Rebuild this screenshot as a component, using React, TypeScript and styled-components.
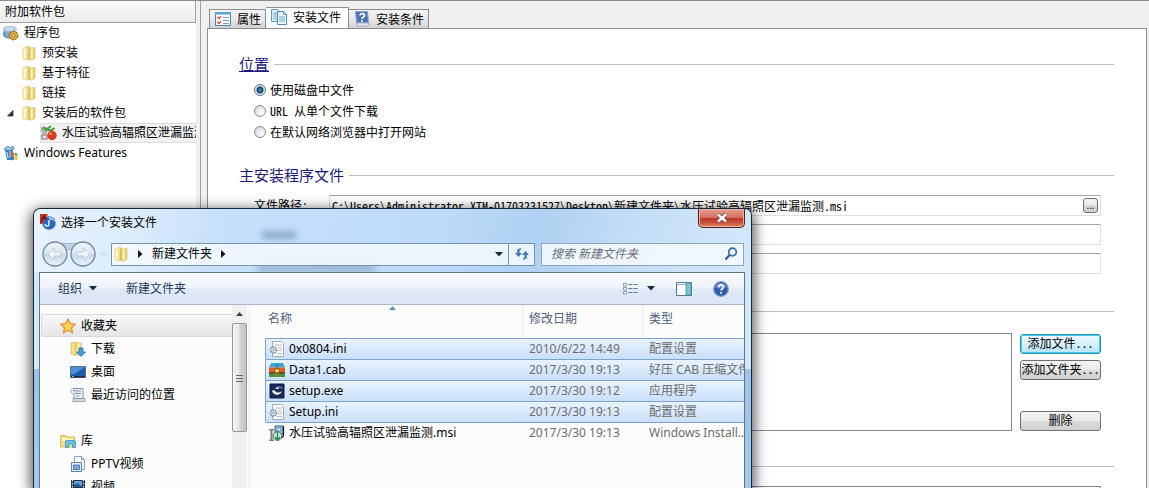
import React from "react";
import styled, { createGlobalStyle, css } from "styled-components";

const uiFont = `"Noto Sans", "Noto Sans CJK SC", sans-serif`;
const formFont = `"Noto Sans Mono CJK SC", "Liberation Mono", "Noto Sans CJK SC", monospace`;

const GlobalStyle = createGlobalStyle`
  * { box-sizing: border-box; }
  body { margin: 0; overflow: hidden; background: #f0f0f0; color: #000; font: 12px/20px ${uiFont}; }
  button, input { font: inherit; color: inherit; margin: 0; padding: 0; }
  ul, h1, h2 { margin: 0; padding: 0; list-style: none; font-weight: normal; }
`;

const Desktop = styled.div`
  position: relative;
  display: flex;
  height: 100vh;
  overflow: hidden;
  border-top: 1px solid #8c8c8c;
`;

/* ---------- package tree ---------- */

const Sidebar = styled.aside`
  flex: 0 0 196px;
  background: #fff;
  overflow: hidden;
`;

const SidebarTitle = styled.h1`
  height: 22px;
  padding-left: 5px;
  font-size: 12px;
  line-height: 21px;
  background: linear-gradient(#fafafa, #ebebeb);
  border-right: 1px solid #a0a0a0;
  border-bottom: 1px solid #a0a0a0;
`;

const TreeRow = styled.li<{ $level: number; $selected?: boolean }>`
  display: flex;
  align-items: center;
  gap: 5px;
  height: 20px;
  margin-left: ${(p) => [3, 7, 40][p.$level]}px;
  white-space: nowrap;
  ${(p) => p.$selected && css`
    background: #f1f1f1;
    border: 1px solid #dedede;
    border-right: 0;
    border-radius: 2px 0 0 2px;
  `}
  svg { flex: none; }
`;

const Expander = styled.span`
  display: flex;
  width: 9px;
  flex: none;
`;

/* ---------- work area ---------- */

const Main = styled.main`
  flex: 1;
  display: flex;
  flex-direction: column;
  min-width: 0;
  margin-left: 4px;
  padding: 6px 2px 0 6px;
  border-left: 1px solid #a0a0a0;
  font-family: ${formFont};
`;

const TabStrip = styled.div`
  display: flex;
  align-items: flex-end;
  height: 22px;
  margin-bottom: -1px;
  padding-left: 2px;
`;

const Tab = styled.button<{ $active?: boolean }>`
  display: flex;
  align-items: center;
  justify-content: center;
  gap: 6px;
  height: ${(p) => (p.$active ? 22 : 20)}px;
  padding: 0 ${(p) => (p.$active ? 7 : 4)}px ${(p) => (p.$active ? 2 : 0)}px 5px;
  border: 1px solid #8c8e94;
  border-bottom-color: ${(p) => (p.$active ? "#fff" : "#8c8e94")};
  background: ${(p) => (p.$active ? "#fff" : "linear-gradient(#f3f3f3, #e9e9e9 50%, #d2d2d2)")};
  & + & { border-left-width: 0; }
`;

const Panel = styled.div`
  flex: 1;
  padding: 25px 32px 0 31px;
  background: #fff;
  border: 1px solid #8c8e94;
  border-bottom: 0;
`;

const Section = styled.section`
  display: flex;
  flex-direction: column;
  gap: 12px;
  margin-bottom: 25px;
`;

const ChoiceSection = styled(Section)`
  gap: 5px;
  margin-bottom: 23px;
`;

const FieldSection = styled(Section)`
  gap: 10px;
  margin-bottom: 27px;
`;

const SectionTitle = styled.h2`
  display: flex;
  align-items: center;
  gap: 5px;
  height: 20px;
  font-size: 15px;
  color: #1a1a7c;
  &::after { content: ""; flex: 1; border-top: 1px solid #bdbdbd; }
`;

const TitleText = styled.span<{ $underlined?: boolean }>`
  text-decoration: ${(p) => (p.$underlined ? "underline" : "none")};
`;

const SectionBody = styled.div<{ $gap?: number }>`
  display: flex;
  flex-direction: column;
  gap: ${(p) => p.$gap ?? 0}px;
  padding: 0 13px 0 15px;
`;

const Choice = styled.label`
  display: flex;
  align-items: center;
  gap: 4px;
  height: 21px;
`;

const Radio = styled.input`
  appearance: none;
  width: 12px;
  height: 12px;
  border: 1px solid #8e8f8f;
  border-radius: 50%;
  background: radial-gradient(circle at 70% 70%, #fff, #cfcfcf);
  &:checked {
    border-color: #5b7082;
    background: radial-gradient(circle, #5fb4d8 0, #14517f 2px, #123f63 3px, #e4eaee 4px);
  }
`;

const FieldRow = styled.div`
  display: flex;
  height: 21px;
`;

const FieldLabel = styled.label`
  flex: 0 0 75px;
`;

const Field = styled.div`
  flex: 1;
  display: flex;
  align-items: center;
  min-width: 0;
  padding: 0 2px;
  background: #fff;
  border: 1px solid #dcdfe3;
  border-top-color: #a4a6aa;
`;

const TextInput = styled.input`
  flex: 1;
  min-width: 0;
  height: 18px;
  border: 0;
  outline: 0;
  background: none;
`;

const PushButton = styled.button<{ $hot?: boolean }>`
  height: 20px;
  line-height: 14px;
  padding-bottom: 3px;
  white-space: nowrap;
  border: 1px solid #707070;
  border-radius: 3px;
  background: linear-gradient(#f3f3f3, #ebebeb 49%, #dcdcdc 50%, #cfcfcf);
  ${(p) => p.$hot && css`
    border-color: #2c91b0;
    box-shadow: inset 0 0 0 1px #40cdf0;
    background: linear-gradient(#eef8fd, #d8f0fb 50%, #b6e4f8);
  `}
`;

const BrowseButton = styled(PushButton)`
  width: 15px;
  height: 15px;
  padding-bottom: 0;
  line-height: 11px;
  font-size: 10px;
  font-family: ${uiFont};
`;

const FilesArea = styled.div`
  display: flex;
  gap: 8px;
  height: 98px;
`;

const FilesBox = styled.div`
  flex: 1;
  border: 1px solid #828790;
`;

const ButtonColumn = styled.div`
  display: flex;
  flex-direction: column;
  gap: 6px;
  width: 81px;
  padding-top: 1px;
  & > :last-child { margin-top: auto; }
`;

const NextBox = styled.div`
  height: 60px;
  border: 1px solid #828790;
`;

/* ---------- file dialog ---------- */

const Dialog = styled.div`
  position: absolute;
  top: 207px;
  left: 33px;
  bottom: 0;
  display: flex;
  flex-direction: column;
  width: 719px;
  padding: 0 6px 0 5px;
  overflow: hidden;
  border: 1px solid #16283a;
  border-bottom: 0;
  border-radius: 7px 7px 0 0;
  background:
    linear-gradient(100deg, #e6f2fd 0, #dcecfb 100px, #c6e0fb 190px, #bddbfa 400px, #b0d1f3 500px, #c4def7 600px, #d3e8fa) 0 0 / 100% 64px no-repeat,
    linear-gradient(#d4eafb 0, #d2e9fa 160px, #9cc4e8 160px, #a4c9ea);
`;

const DialogShadow = styled.div`
  position: absolute;
  top: 207px;
  left: 33px;
  bottom: 0;
  width: 719px;
  border-radius: 7px 7px 0 0;
  box-shadow: 0 4px 14px 2px rgba(0, 0, 0, 0.7);
`;

const Smudge = styled.span<{ $x: number; $y: number; $w: number; $h: number }>`
  position: absolute;
  left: ${(p) => p.$x}px;
  top: ${(p) => p.$y}px;
  width: ${(p) => p.$w}px;
  height: ${(p) => p.$h}px;
  background: #3d5f80;
  opacity: 0.4;
  filter: blur(3px);
`;

const TitleBar = styled.div`
  position: relative;
  display: flex;
  height: 31px;
  gap: 5px;
  padding-left: 1px;
  & > svg { margin-top: 5px; }
`;

const DialogTitle = styled.h2`
  flex: 1;
  padding-top: 4px;
  font-size: 12px;
`;

const CloseButton = styled.button`
  display: flex;
  align-items: center;
  justify-content: center;
  width: 47px;
  height: 19px;
  border: 1px solid #5b1c17;
  border-top: 0;
  border-radius: 0 0 5px 5px;
  box-shadow: inset 0 0 0 1px #eeb1a6;
  background: linear-gradient(#e3a093, #d2705f 48%, #b93522 50%, #c8503c 75%, #df8a68);
`;

const NavBar = styled.div`
  position: relative;
  display: flex;
  align-items: center;
  height: 32px;
  padding: 0 1px 4px 2px;
`;

const AddressBar = styled.div`
  flex: 1;
  display: flex;
  height: 23px;
  margin: 0 6px 0 4px;
  border: 1px solid #7a93ad;
  background: rgba(245, 250, 255, 0.85);
`;

const Crumbs = styled.div`
  flex: 1;
  display: flex;
  align-items: center;
  gap: 9px;
  padding: 0 5px 0 1px;
`;

const CrumbButton = styled.button`
  border: 0;
  background: none;
`;

const PlainButton = styled.button`
  display: flex;
  align-items: center;
  gap: 7px;
  border: 0;
  background: none;
`;

const DropButton = styled(PlainButton)`
  padding-right: 5px;
`;

const RefreshButton = styled(PlainButton)`
  justify-content: center;
  width: 26px;
  border-left: 1px solid #7a93ad;
`;

const SearchBox = styled.div`
  display: flex;
  align-items: center;
  width: 203px;
  height: 23px;
  padding: 0 5px 0 9px;
  border: 1px solid #8fa6be;
  background: rgba(245, 250, 255, 0.88);
`;

const SearchInput = styled(TextInput)`
  font-style: italic;
  &::placeholder { color: #6a6f76; opacity: 1; }
`;

const Client = styled.div`
  position: relative;
  flex: 1;
  display: flex;
  flex-direction: column;
  min-height: 0;
  border: 1px solid #5a7591;
  border-bottom: 0;
  background: #fcfcfc;
`;

const CommandBar = styled.div`
  display: flex;
  align-items: center;
  gap: 29px;
  flex: 0 0 32px;
  padding: 0 15px 0 18px;
  color: #1e395b;
  border-bottom: 1px solid #a9b8cc;
  background: linear-gradient(#fafcfe, #edf3fb 48%, #dfe8f5 52%, #dce6f4);
`;

const CommandTools = styled.div`
  display: flex;
  align-items: center;
  gap: 21px;
  margin-left: auto;
`;

const ViewTools = styled.div`
  display: flex;
  align-items: center;
  gap: 9px;
`;

const Columns = styled.div`
  flex: 1;
  display: flex;
  min-height: 0;
`;

const Places = styled.ul`
  flex: 1;
  min-width: 0;
  padding: 9px 0 0 1px;
`;

const Place = styled.li<{ $root?: boolean; $selected?: boolean; $spaced?: boolean }>`
  display: flex;
  align-items: center;
  gap: 5px;
  height: 23px;
  margin-top: ${(p) => (p.$spaced ? 23 : 0)}px;
  padding-left: ${(p) => (p.$root ? 18 : 28)}px;
  border: 1px solid transparent;
  border-right: 0;
  ${(p) => p.$selected && css`
    border-color: #dadada;
    border-radius: 3px 0 0 3px;
    background: linear-gradient(#f8f8f8, #e6e6e6);
  `}
`;

const PlacesPane = styled.nav`
  flex: 0 0 210px;
  display: flex;
  overflow: hidden;
  margin-right: 2px;
  border-right: 1px solid #e6edf5;
`;

const ScrollBar = styled.div`
  display: flex;
  flex-direction: column;
  align-items: center;
  width: 15px;
  margin-right: 2px;
  padding-top: 7px;
  gap: 7px;
  background: #f0f0f0;
`;

const ScrollThumb = styled.div`
  display: flex;
  align-items: center;
  justify-content: center;
  width: 15px;
  height: 109px;
  border: 1px solid #979797;
  border-radius: 2px;
  background: linear-gradient(90deg, #f4f4f4, #e6e6e6 48%, #d3d3d3 52%, #c5c5c5);
`;

const FilesPane = styled.div`
  position: relative;
  flex: 1;
  min-width: 0;
  overflow: hidden;
  padding-left: 13px;
`;

const SortMark = styled.svg`
  position: absolute;
  left: 137px;
  top: 1px;
`;

const FileTable = styled.table`
  width: 500px;
  table-layout: fixed;
  border-collapse: separate;
  border-spacing: 0;
  white-space: nowrap;
`;

const HeadCell = styled.th<{ $w?: number }>`
  width: ${(p) => (p.$w ? `${p.$w}px` : "auto")};
  height: 33px;
  padding: 0 0 6px 6px;
  color: #4c607a;
  font-weight: normal;
  text-align: left;
  border-right: 1px solid #e8edf3;
  &:first-child { padding-left: 3px; }
`;

const FileRow = styled.tr<{ $selected?: boolean }>`
  height: 21px;
  td {
    height: 21px;
    padding: 0 0 0 6px;
    line-height: 20px;
    color: #6d6d6d;
    border-top: 1px solid ${(p) => (p.$selected ? "#7da2ce" : "transparent")};
    overflow: hidden;
    ${(p) => p.$selected && css`
      background: linear-gradient(#e9f3fe, #c9dffa);
      box-shadow: 0 1px 0 #7da2ce;
    `}
  }
  td:first-child {
    padding-left: 3px;
    color: #000;
    border-left: 1px solid ${(p) => (p.$selected ? "#7da2ce" : "transparent")};
    border-radius: 2px 0 0 2px;
  }
`;

const FileName = styled.span`
  display: flex;
  align-items: center;
  gap: 4px;
`;

/* ---------- drawings ---------- */

const Svg = ({ w = 16, h = 16, children }: { w?: number; h?: number; children: React.ReactNode }) => (
  <svg width={w} height={h} viewBox={`0 0 ${w} ${h}`} aria-hidden="true">{children}</svg>
);

const FolderIcon = () => (
  <Svg>
    <path d="M2 3l5-2v14l-5-1.500z" fill="#f6e69c" stroke="#e3cb74" strokeWidth=".7" />
    <path d="M7 1.500h2v13.300H7z" fill="#dcc164" />
    <path d="M9 3.200l5-.7v11l-5 1.800z" fill="#f3df8c" stroke="#dcc063" strokeWidth=".7" />
    <path d="M3.700 3.500v9.500" stroke="#fffbe2" strokeWidth="1.800" />
    <path d="M10.500 4v9.500" stroke="#fff6c8" strokeWidth="1.500" />
    <path d="M13 3v10.500" stroke="#dfc25c" />
  </Svg>
);

const PackageIcon = () => (
  <Svg>
    <path d="M.5 4v7c1 2 9 2 12 0V4z" fill="#7ea9d4" />
    <ellipse cx="7" cy="4" rx="6.500" ry="2.800" fill="#c3daee" stroke="#86a8c8" strokeWidth=".7" />
    <path d="M1 7v4c2 2 4 2 5 2" fill="none" stroke="#3f6d9f" />
    <circle cx="10.500" cy="10.500" r="4.200" fill="#f3b63c" stroke="#9a6414" strokeWidth="1.400" strokeDasharray="2.200 .9" />
    <circle cx="10.500" cy="10.500" r="1.600" fill="#fff" stroke="#8a5a10" />
  </Svg>
);

const FeaturesIcon = () => (
  <Svg>
    <path d="M2 5l8-1-1 11H4z" fill="#3f7fb4" />
    <path d="M1 4l4-3 2 2 3-2 1 3-5 2z" fill="#9cc6e4" stroke="#3c6e9b" strokeWidth=".7" />
    <path d="M4 7l1 6M7 6v7" stroke="#c7e1f3" />
    <path d="M8 8.500l3-1v3l-3 1z" fill="#e0542f" />
    <path d="M11.500 7.500l3 1v3l-3-1z" fill="#6fb53c" />
    <path d="M8 12l3-1v3.500l-3 1z" fill="#2f77c9" />
    <path d="M11.500 11l3.500 1-1 3h-2.500z" fill="#f3c52f" />
  </Svg>
);

const ProductIcon = () => (
  <Svg>
    <path d="M1 3h5v3H1zM1 8h5M1 10h5v4H1z" fill="#f4e4cf" stroke="#777" strokeWidth="1.100" />
    <path d="M2 2l3 3 5-4" fill="none" stroke="#3aa536" strokeWidth="2" />
    <path d="M7 5l3 .5L13.500 3" fill="none" stroke="#3b8d2c" strokeWidth="1.800" />
    <circle cx="11" cy="10.500" r="4.700" fill="#dc3a1a" />
    <circle cx="9.500" cy="8.800" r="1.300" fill="#f6a084" />
  </Svg>
);

const CollapseIcon = () => (
  <Svg w={7} h={7}><path d="M6 .5V6H.5z" fill="#333" stroke="#222" strokeWidth=".7" /></Svg>
);

const ChecklistIcon = () => (
  <Svg>
    <path d="M.5 1.500h15v13H.5z" fill="#f7fbfd" stroke="#4b86ad" />
    <path d="M0 1h16v2.500H0z" fill="#55a5cf" />
    <path d="M2.500 6l1.500 1.500L6 5M2.500 11l1.500 1.500L6 10" fill="none" stroke="#d23b2c" strokeWidth="1.200" />
    <path d="M8 6.500h6M8 9.500h6M8 12.500h6" stroke="#7ba3a8" />
  </Svg>
);

const PagesIcon = () => (
  <Svg>
    <path d="M.5.5h6l2 2v10h-8z" fill="#e2f0fa" stroke="#5c9ac6" />
    <path d="M2 4h4M2 6h4M2 8h4M2 10h4" stroke="#7db1d6" />
    <path d="M6.500 2.500h6l3 3v10h-9z" fill="#eef7fd" stroke="#4a8cbd" />
    <path d="M12.500 2.500v3h3M8 8h6M8 10h6M8 12h6" fill="none" stroke="#6aa5d0" />
  </Svg>
);

const ConditionIcon = () => (
  <Svg>
    <path d="M1.500.5h12l1 11h-12z" fill="#4a74b8" stroke="#8ca6cf" />
    <path d="M2.500 12h12.500l-1 3H3z" fill="#dfe6f1" stroke="#8798b5" strokeWidth=".7" />
    <path d="M6 4.500c0-2.500 4.500-2.500 4.500 0C10.500 6 8 6 8 8M8 9v1.800" fill="none" stroke="#fff" strokeWidth="1.700" />
  </Svg>
);

const InstallerIcon = () => (
  <Svg>
    <circle cx="9" cy="9" r="6.700" fill="#2c67b8" />
    <path d="M8 3c4-1 7 2 7 5-2-2-4-2-5-2z" fill="#8cc0ec" />
    <path d="M9 6v4a2 2 0 0 1-4 0" fill="none" stroke="#dbeeff" strokeWidth="1.500" />
    <path d="M0 0h8L6 4l-4 6H0z" fill="#c9301d" />
    <path d="M1 8l3-6 2 4" fill="none" stroke="#5c120b" strokeWidth="1.200" />
  </Svg>
);

const CloseGlyph = () => (
  <Svg w={12} h={10}>
    <path d="M2 1.500l8 7M10 1.500l-8 7" stroke="#6b3a35" strokeWidth="4" />
    <path d="M2 1.500l8 7M10 1.500l-8 7" stroke="#fff" strokeWidth="2.400" />
  </Svg>
);

const HistoryButtons = () => (
  <Svg w={66} h={26}>
    <defs>
      <linearGradient id="orb" x1="0" x2="0" y1="0" y2="1">
        <stop offset="0" stopColor="#eef4fa" /><stop offset=".48" stopColor="#dbe6f1" />
        <stop offset=".52" stopColor="#c9d8e6" /><stop offset="1" stopColor="#ebf4fb" />
      </linearGradient>
    </defs>
    <path d="M20 2.500h16v6H20z" fill="#c3d4e5" stroke="#8aa3bc" strokeWidth=".7" />
    <circle cx="14" cy="13" r="12" fill="url(#orb)" stroke="#7288a0" strokeWidth="1.300" />
    <circle cx="42" cy="13" r="12" fill="url(#orb)" stroke="#7288a0" strokeWidth="1.300" />
    <path d="M7 13l6-6v4h7v4h-7v4z" fill="#edf4fa" stroke="#b4c5d6" strokeWidth=".8" />
    <path d="M49 13l-6-6v4h-7v4h7v4z" fill="#edf4fa" stroke="#b4c5d6" strokeWidth=".8" />
    <path d="M59 12h6l-3 3.500z" fill="#e9f3fb" stroke="#b0c3d6" strokeWidth=".6" />
  </Svg>
);

const RightMark = () => <Svg w={5} h={8}><path d="M0 0l4.500 4L0 8z" fill="#111" /></Svg>;
const DownMark = () => <Svg w={8} h={5}><path d="M0 0h8L4 4.500z" fill="#12274a" /></Svg>;

const RefreshIcon = () => (
  <Svg>
    <path d="M1 7h2.200V3.500L7 2v1.500l-1.500 1V7H8l-3.500 4z" fill="#3c79b5" />
    <path d="M15 9h-2.200v3.500L9 14v-1.500l1.500-1V9H8l3.500-4z" fill="#3c79b5" />
  </Svg>
);

const SearchIcon = () => (
  <Svg w={14} h={14}>
    <circle cx="8.500" cy="5" r="3.800" fill="#e6f3fd" stroke="#3a6da3" strokeWidth="1.700" />
    <path d="M5.500 8L1.500 12.500" stroke="#2c5a90" strokeWidth="2.200" />
  </Svg>
);

const ViewIcon = () => (
  <Svg>
    <path d="M1.500 2.500h3v2.500h-3zM1.500 6.500h3v2.500h-3zM1.500 10.500h3v2.500h-3z" fill="#fff" stroke="#7189a5" strokeWidth=".8" />
    <path d="M6.500 3.500h4M11.500 3.500h4M6.500 7.500h4M11.500 7.500h4M6.500 11.500h4M11.500 11.500h4" stroke="#61788f" />
  </Svg>
);

const PreviewIcon = () => (
  <Svg>
    <path d="M.5 1.500h15v13H.5z" fill="#fff" stroke="#5b7591" />
    <path d="M1 3.500h10" stroke="#9fb1c5" />
    <path d="M10 2h5v12h-5z" fill="#7cc3d8" stroke="#4f8ea8" strokeWidth=".8" />
  </Svg>
);

const HelpIcon = () => (
  <Svg>
    <circle cx="8" cy="8" r="7.300" fill="#3159b0" stroke="#7f97c4" strokeWidth="1.200" />
    <path d="M2 6c2-5 10-5 12 0-4 2-8 2-12 0z" fill="#6a8bd0" />
    <path d="M5.700 6.200c0-3 4.600-3 4.600 0C10.300 8 8 8 8 9.600M8 11v1.800" fill="none" stroke="#fff" strokeWidth="1.700" />
  </Svg>
);

const StarIcon = () => (
  <Svg><path d="M8 1l2.200 4.600 5 .7-3.700 3.500 1 5L8 12.300 3.500 14.800l1-5L.8 6.300l5-.7z" fill="#ffd257" stroke="#e0862a" strokeWidth="1.100" /></Svg>
);

const DownloadIcon = () => (
  <Svg>
    <path d="M1 2l5-1v13l-5-1z" fill="#f3df8a" stroke="#d2b14a" strokeWidth=".7" />
    <path d="M6 2h5v12H6z" fill="#f8e8a2" stroke="#d2b14a" strokeWidth=".7" />
    <path d="M9 7h4v4h2.500L11 15.500 6.500 11H9z" fill="#3f9fe0" stroke="#1f68aa" strokeWidth=".7" />
  </Svg>
);

const MonitorIcon = () => (
  <Svg>
    <path d="M.5 2.500h15v11H.5z" fill="#1f5db0" stroke="#5f6c7c" />
    <path d="M1 3h14L4 10H1z" fill="#4e90da" />
    <path d="M1 12h14v1.500H1z" fill="#163055" />
    <path d="M2 12h2v1H2z" fill="#7ed06a" />
  </Svg>
);

const RecentIcon = () => (
  <Svg>
    <path d="M4 1.500h9v10H4z" fill="#eef4f9" stroke="#8396aa" />
    <path d="M3 11.500h12v3H3z" fill="#cfdae5" stroke="#8396aa" strokeWidth=".8" />
    <path d="M6 4h5M6 6.500h5M6 9h3" stroke="#6f8fb0" />
    <circle cx="3.500" cy="4" r="2.700" fill="#fff" stroke="#9aa9b8" />
    <path d="M3.500 2.500V4H5" fill="none" stroke="#557" strokeWidth=".8" />
  </Svg>
);

const LibraryIcon = () => (
  <Svg>
    <path d="M.5 2.500h5l1 1.500h8v10H.5z" fill="#f5dd83" stroke="#cfac45" strokeWidth=".8" />
    <path d="M2 5h11v3H2z" fill="#fdf3c0" />
    <path d="M5.500 14.500V9a1.500 1.500 0 0 1 1.500-1.500h7A1.500 1.500 0 0 1 15.500 9v5.500h-3V11h-4v3.500z" fill="#6bc1e8" stroke="#3b8fc0" strokeWidth=".8" />
  </Svg>
);

const PptvIcon = () => (
  <Svg>
    <path d="M4.500.5h7l3 3v10h-10z" fill="#f4f8fc" stroke="#8da3ba" />
    <path d="M11.500.5v3h3" fill="none" stroke="#8da3ba" />
    <path d="M1.500 6.500h10v9h-10z" fill="#e3eefa" stroke="#5c83b3" />
    <path d="M3.500 9h6v4.500h-6z" fill="#77a9de" stroke="#3a6fb0" strokeWidth=".8" />
  </Svg>
);

const FilmIcon = () => (
  <Svg>
    <path d="M1 1h14v14H1z" fill="#27313c" />
    <path d="M4 2h8v6H4zM4 9h8v5H4z" fill="#5ba7dd" />
    <path d="M4 6l3-2 5 3v1H4z" fill="#2c5d90" />
    <path d="M2.500 1v14M13.500 1v14" stroke="#e3e8ec" strokeWidth="1.200" strokeDasharray="1.500 1.500" />
  </Svg>
);

const IniIcon = () => (
  <Svg>
    <path d="M3.500.5h9l2 2v13h-11z" fill="#fbfbfb" stroke="#9aa3ac" strokeWidth=".9" />
    <path d="M6 4h7M9 7h4M9 9.500h4M8 12.500h5" stroke="#b4bcc4" />
    <circle cx="4.500" cy="9" r="3" fill="#e3ebf2" stroke="#71879c" strokeWidth="1.500" strokeDasharray="1.500 .7" />
    <circle cx="4.500" cy="9" r="1" fill="#fff" stroke="#71879c" strokeWidth=".6" />
  </Svg>
);

const CabIcon = () => (
  <Svg>
    <path d="M2 1h12l2 4.500H0z" fill="#3fa9d6" />
    <path d="M0 5.500h16v4.500H0z" fill="#d9622c" />
    <path d="M0 10h16v2H0z" fill="#7b3a1c" />
    <path d="M0 11.500h16v3.500H0z" fill="#3f9447" />
    <path d="M6.500 5.500h3V15h-3z" fill="#a8702c" />
    <path d="M5.500 7h5v3.500h-5z" fill="#f2cf5b" stroke="#7a4d14" strokeWidth=".7" />
    <path d="M6 2l2 2 2-2" fill="none" stroke="#2a7fae" strokeWidth="1.200" />
  </Svg>
);

const SetupIcon = () => (
  <Svg>
    <path d="M1 1h14v14H1z" fill="#182c5a" stroke="#0c1a3a" />
    <path d="M3 8c2 5 8 5 10 0-3 2.500-6 2-8-1z" fill="#fff" />
    <path d="M6 6l3-3 1 3z" fill="#cfe0f5" />
    <path d="M10 4c2 0 3 1 3 2" fill="none" stroke="#8fb1e0" />
  </Svg>
);

const MsiIcon = () => (
  <Svg>
    <path d="M0 4h5v1.500H3.500v9H5V16H0v-1.500h1.500v-9H0z" fill="#777d80" />
    <path d="M6 1h8v8H6z" fill="#a9d3ee" stroke="#265b8c" />
    <path d="M8 3h4v3H8z" fill="#fff" stroke="#265b8c" strokeWidth=".7" />
    <path d="M14.500 1v10l-2 2" fill="none" stroke="#222" strokeWidth="1.300" />
    <circle cx="8.500" cy="11" r="4.300" fill="#d4e6dc" stroke="#33735a" />
    <path d="M8.500 7v8M6 12l2.500 3 2.500-3" fill="none" stroke="#1f8a4c" strokeWidth="1.300" />
  </Svg>
);

/* ---------- data ---------- */

const files = [
  { name: "0x0804.ini", date: "2010/6/22 14:49", kind: "配置设置", Icon: IniIcon, selected: true },
  { name: "Data1.cab", date: "2017/3/30 19:13", kind: "好压 CAB 压缩文件", Icon: CabIcon, selected: true },
  { name: "setup.exe", date: "2017/3/30 19:12", kind: "应用程序", Icon: SetupIcon, selected: true },
  { name: "Setup.ini", date: "2017/3/30 19:13", kind: "配置设置", Icon: IniIcon, selected: true },
  { name: "水压试验高辐照区泄漏监测.msi", date: "2017/3/30 19:13", kind: "Windows Install...", Icon: MsiIcon, selected: false },
];

const places = [
  { name: "收藏夹", Icon: StarIcon, root: true, selected: true },
  { name: "下载", Icon: DownloadIcon },
  { name: "桌面", Icon: MonitorIcon },
  { name: "最近访问的位置", Icon: RecentIcon },
  { name: "库", Icon: LibraryIcon, root: true, spaced: true },
  { name: "PPTV视频", Icon: PptvIcon },
  { name: "视频", Icon: FilmIcon },
];

const choices = ["使用磁盘中文件", "URL 从单个文件下载", "在默认网络浏览器中打开网站"];

const PackageTree = () => (
  <Sidebar>
    <SidebarTitle>附加软件包</SidebarTitle>
    <ul>
      <TreeRow $level={0}><PackageIcon />程序包</TreeRow>
      {["预安装", "基于特征", "链接"].map((name) => (
        <TreeRow key={name} $level={1}><Expander /><FolderIcon />{name}</TreeRow>
      ))}
      <TreeRow $level={1}><Expander><CollapseIcon /></Expander><FolderIcon />安装后的软件包</TreeRow>
      <TreeRow $level={2} $selected><ProductIcon />水压试验高辐照区泄漏监测</TreeRow>
      <TreeRow $level={0}><FeaturesIcon />Windows Features</TreeRow>
    </ul>
  </Sidebar>
);

const InstallForm = () => (
  <Main>
    <TabStrip role="tablist">
      <Tab role="tab"><ChecklistIcon />属性</Tab>
      <Tab role="tab" $active aria-selected="true"><PagesIcon />安装文件</Tab>
      <Tab role="tab"><ConditionIcon />安装条件</Tab>
    </TabStrip>
    <Panel>
      <ChoiceSection>
        <SectionTitle><TitleText $underlined>位置</TitleText></SectionTitle>
        <SectionBody>
          {choices.map((text, i) => (
            <Choice key={text}><Radio type="radio" name="source" defaultChecked={i === 0} />{text}</Choice>
          ))}
        </SectionBody>
      </ChoiceSection>
      <FieldSection>
        <SectionTitle><TitleText>主安装程序文件</TitleText></SectionTitle>
        <SectionBody $gap={8}>
          <FieldRow>
            <FieldLabel htmlFor="path">文件路径:</FieldLabel>
            <Field>
              <TextInput id="path" defaultValue="C:\Users\Administrator.XTM-01703231527\Desktop\新建文件夹\水压试验高辐照区泄漏监测.msi" />
              <BrowseButton>...</BrowseButton>
            </Field>
          </FieldRow>
          <FieldRow><FieldLabel htmlFor="args" /><Field><TextInput id="args" /></Field></FieldRow>
          <FieldRow><FieldLabel htmlFor="quiet" /><Field><TextInput id="quiet" /></Field></FieldRow>
        </SectionBody>
      </FieldSection>
      <Section>
        <SectionTitle />
        <SectionBody>
          <FilesArea>
            <FilesBox />
            <ButtonColumn>
              <PushButton $hot>添加文件...</PushButton>
              <PushButton>添加文件夹...</PushButton>
              <PushButton>删除</PushButton>
            </ButtonColumn>
          </FilesArea>
        </SectionBody>
      </Section>
      <FieldSection>
        <SectionTitle />
        <SectionBody><NextBox /></SectionBody>
      </FieldSection>
    </Panel>
  </Main>
);

const OpenDialog = () => (
  <>
    <DialogShadow />
    <Dialog role="dialog">
      <Smudge $x={228} $y={22} $w={34} $h={8} />
      <Smudge $x={223} $y={56} $w={118} $h={6} />
      <TitleBar>
        <InstallerIcon />
        <DialogTitle>选择一个安装文件</DialogTitle>
        <CloseButton><CloseGlyph /></CloseButton>
      </TitleBar>
      <NavBar>
        <HistoryButtons />
        <AddressBar>
          <Crumbs>
            <FolderIcon />
            <RightMark />
            <CrumbButton>新建文件夹</CrumbButton>
            <RightMark />
          </Crumbs>
          <DropButton><DownMark /></DropButton>
          <RefreshButton><RefreshIcon /></RefreshButton>
        </AddressBar>
        <SearchBox>
          <SearchInput type="text" placeholder="搜索 新建文件夹" />
          <SearchIcon />
        </SearchBox>
      </NavBar>
      <Client>
        <CommandBar>
          <PlainButton>组织<DownMark /></PlainButton>
          <PlainButton>新建文件夹</PlainButton>
          <CommandTools>
            <ViewTools>
              <PlainButton><ViewIcon /></PlainButton>
              <PlainButton><DownMark /></PlainButton>
            </ViewTools>
            <PlainButton><PreviewIcon /></PlainButton>
            <PlainButton><HelpIcon /></PlainButton>
          </CommandTools>
        </CommandBar>
        <Columns>
          <PlacesPane>
            <Places>
              {places.map(({ name, Icon, root, selected, spaced }) => (
                <Place key={name} $root={root} $selected={selected} $spaced={spaced}><Icon />{name}</Place>
              ))}
            </Places>
            <ScrollBar>
              <Svg w={7} h={4}><path d="M0 4h7L3.500 0z" fill="#404040" /></Svg>
              <ScrollThumb><Svg w={7} h={8}><path d="M0 1.500h7M0 4.500h7M0 7.500h7" stroke="#666" /></Svg></ScrollThumb>
            </ScrollBar>
          </PlacesPane>
          <FilesPane>
            <SortMark width="7" height="4" viewBox="0 0 7 4"><path d="M0 4h7L3.500 0z" fill="#5f93b4" /></SortMark>
            <FileTable>
              <thead>
                <tr><HeadCell $w={258}>名称</HeadCell><HeadCell $w={120}>修改日期</HeadCell><HeadCell>类型</HeadCell></tr>
              </thead>
              <tbody>
                {files.map(({ name, date, kind, Icon, selected }) => (
                  <FileRow key={name} $selected={selected}>
                    <td><FileName><Icon />{name}</FileName></td>
                    <td>{date}</td>
                    <td>{kind}</td>
                  </FileRow>
                ))}
              </tbody>
            </FileTable>
          </FilesPane>
        </Columns>
      </Client>
    </Dialog>
  </>
);

export default function App() {
  return (
    <>
      <GlobalStyle />
      <Desktop>
        <PackageTree />
        <InstallForm />
        <OpenDialog />
      </Desktop>
    </>
  );
}
